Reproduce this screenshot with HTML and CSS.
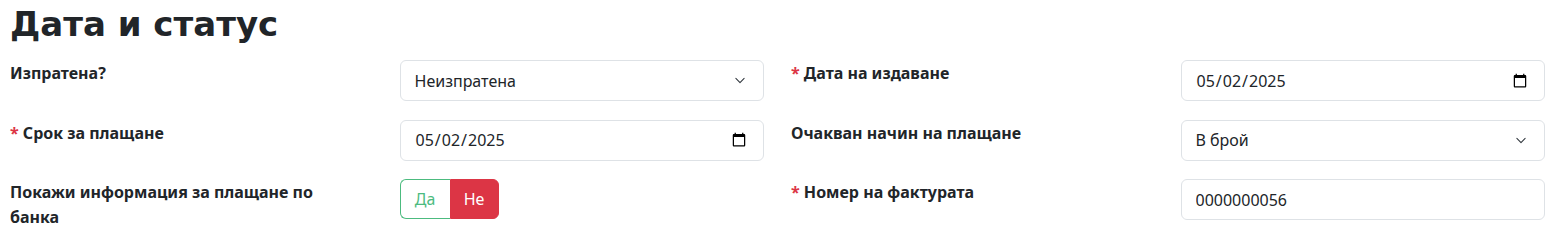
FILE: index.html
```html
<!DOCTYPE html>
<html lang="bg">
<head>
    <meta charset="UTF-8">
    <meta name="viewport" content="width=device-width, initial-scale=1.0">
    <title>Дата и статус</title>
    <link rel="stylesheet" href="styles.css">
</head>
<body>
    <h2 class="section-title">Дата и статус</h2>
    <div class="form-grid">
        <div class="field">
            <label class="field-label" for="sent">Изпратена?</label>
            <div class="field-control">
                <select class="form-select" id="sent">
                    <option>Неизпратена</option>
                    <option>Изпратена</option>
                </select>
            </div>
        </div>
        <div class="field">
            <label class="field-label" for="issue-date"><span class="req">*</span> Дата на издаване</label>
            <div class="field-control">
                <input class="form-control" type="date" id="issue-date" value="2025-05-02">
            </div>
        </div>
        <div class="field">
            <label class="field-label" for="due-date"><span class="req">*</span> Срок за плащане</label>
            <div class="field-control">
                <input class="form-control" type="date" id="due-date" value="2025-05-02">
            </div>
        </div>
        <div class="field">
            <label class="field-label" for="pay-method">Очакван начин на плащане</label>
            <div class="field-control">
                <select class="form-select" id="pay-method">
                    <option>В брой</option>
                    <option>По банка</option>
                </select>
            </div>
        </div>
        <div class="field">
            <label class="field-label">Покажи информация за плащане по банка</label>
            <div class="field-control">
                <div class="toggle">
                    <button class="toggle-btn toggle-yes">Да</button>
                    <button class="toggle-btn toggle-no active">Не</button>
                </div>
            </div>
        </div>
        <div class="field">
            <label class="field-label" for="number"><span class="req">*</span> Номер на фактурата</label>
            <div class="field-control">
                <input class="form-control" type="text" id="number" value="0000000056">
            </div>
        </div>
    </div>
</body>
</html>
```

FILE: styles.css
```css
body {
    margin: 0;
    padding: 0 13px 0 10px;
    font-family: "Noto Sans", "Open Sans", sans-serif;
    font-size: 16px;
    color: #212529;
    background: #fff;
}
.section-title {
    margin: 3px 0 15px;
    font-family: "DejaVu Sans", "Noto Sans", sans-serif;
    font-size: 34px;
    font-weight: 700;
    line-height: 42px;
}
.form-grid {
    display: grid;
    grid-template-columns: 1fr 1fr;
    column-gap: 27px;
    row-gap: 18.5px;
}
.field {
    display: grid;
    grid-template-columns: 1fr 1fr;
    column-gap: 25px;
    min-height: 41px;
}
.field-label {
    font-weight: 700;
    line-height: 25px;
    padding-top: 1px;
    padding-right: 12px;
}
.req {
    color: #dc3545;
}
.form-control,
.form-select {
    box-sizing: border-box;
    width: 100%;
    height: 41px;
    padding: 6px 14px;
    font-family: inherit;
    font-size: 16px;
    color: #212529;
    background-color: #fff;
    border: 1px solid #dee2e6;
    border-radius: 6px;
    outline: none;
}
.form-select {
    appearance: none;
    padding-right: 40px;
    background-image: url("data:image/svg+xml,%3csvg xmlns='http://www.w3.org/2000/svg' viewBox='0 0 16 16'%3e%3cpath fill='none' stroke='%23343a40' stroke-linecap='round' stroke-linejoin='round' stroke-width='1.6' d='m2 5 6 6 6-6'/%3e%3c/svg%3e");
    background-repeat: no-repeat;
    background-position: right 16px center;
    background-size: 14px 11px;
}
.toggle {
    display: inline-flex;
    height: 40px;
}
.toggle-btn {
    width: 50px;
    font-family: inherit;
    font-size: 16px;
    border: 1px solid #4cbb7f;
    background: #fff;
    color: #4cbb7f;
    cursor: pointer;
}
.toggle-yes {
    border-radius: 6px 0 0 6px;
    border-right: none;
}
.toggle-no {
    border-radius: 0 6px 6px 0;
}
.toggle-no.active {
    width: 49px;
    background: #dc3545;
    border-color: #dc3545;
    color: #fff;
}
```
